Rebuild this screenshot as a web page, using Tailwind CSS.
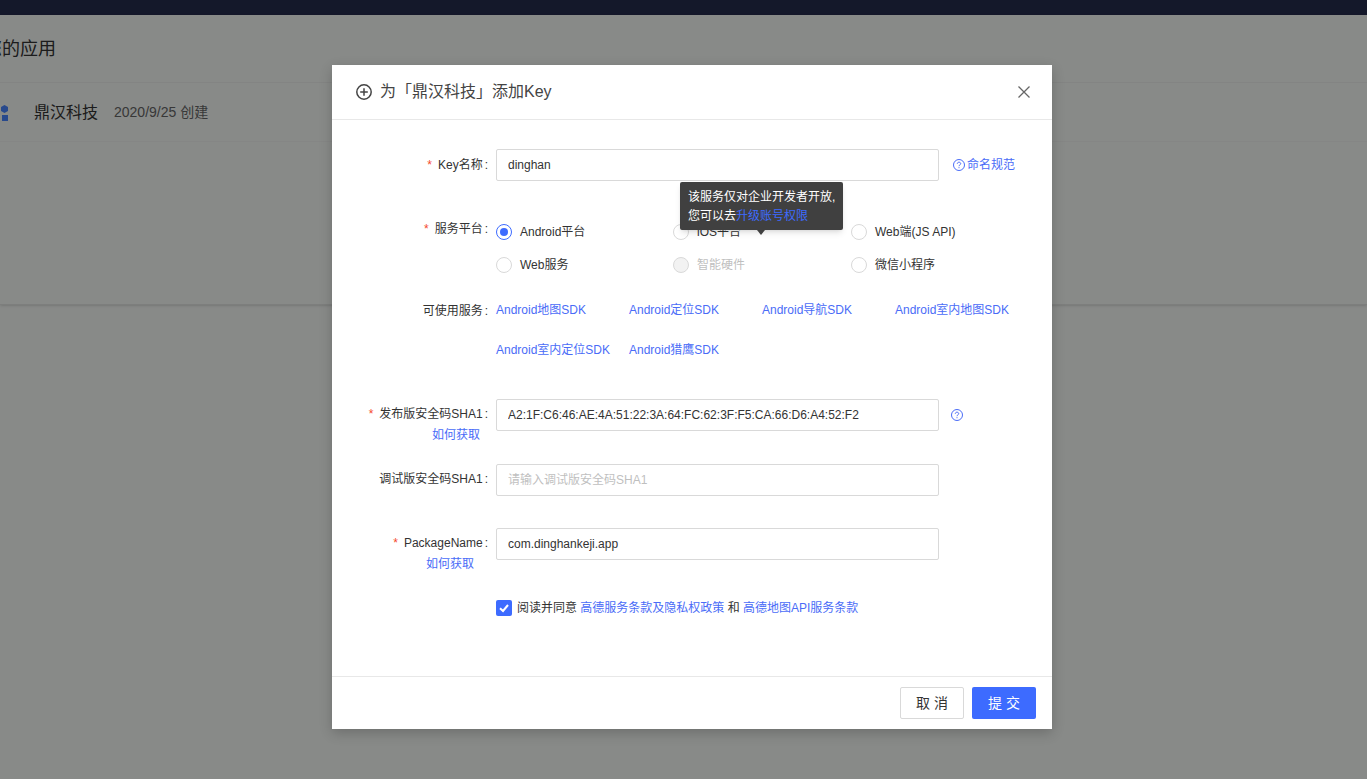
<!DOCTYPE html>
<html lang="zh-CN">
<head>
    <meta charset="UTF-8">
    <meta name="viewport" content="width=device-width, initial-scale=1.0">
    <title>添加Key</title>
    <script src="https://cdn.jsdelivr.net/npm/@tailwindcss/browser@4"></script>
</head>
<body class="relative h-screen overflow-hidden bg-[#f8fbf8] text-[#333] text-xs font-['Liberation_Sans','Noto_Sans_CJK_SC',sans-serif]">
    <!-- page behind the dialog -->
    <div class="h-[15px] bg-[#262c4e]"></div>
    <div class="h-[290px] border-b border-[#e4e6e4] shadow-sm">
        <div class="h-[68px] border-b border-[#eef0ee] -ml-4 flex items-center text-[18px]">您的应用</div>
        <div class="h-[59px] pt-px flex items-center border-b border-[#f3f5f3]">
            <svg class="w-2 h-4 mr-[26px]" viewBox="0 0 8 16"><path d="M4.500 0 8 2v4L4.500 8 1 6V2Z" fill="#4a86ff"/><rect x="2" y="10" width="6" height="6" fill="#4a86ff"/></svg>
            <span class="text-base">鼎汉科技</span>
            <span class="ml-4 mb-0.5 text-sm text-[#666]">2020/9/25 创建</span>
        </div>
    </div>

    <!-- overlay + dialog -->
    <div class="absolute inset-0 bg-black/45">
        <div class="relative ml-[332px] mt-[65px] w-[720px] h-[664px] bg-white flex flex-col shadow-[0_4px_12px_rgba(0,0,0,0.2)]">
            <div class="h-[55px] shrink-0 border-b border-[#e8e8e8] pl-6 pr-[22px] flex items-center">
                <svg class="w-4 h-4 mr-2" viewBox="0 0 16 16" fill="none" stroke="#444" stroke-width="1.500"><circle cx="8" cy="8" r="7.200"/><path d="M8 4.200v7.600M4.200 8h7.600"/></svg>
                <span class="text-base text-[#444]">为「鼎汉科技」添加Key</span>
                <svg class="w-3 h-3 ml-auto" viewBox="0 0 12 12" fill="none" stroke="#666" stroke-width="1.300"><path d="M.5.5l11 11M11.500.5l-11 11"/></svg>
            </div>

            <div class="flex-1 pt-[29px]">
                <!-- Key name -->
                <div class="flex items-center h-8">
                    <div class="w-[156px] text-right mr-2 whitespace-nowrap"><span class="text-[#f5492d] mr-[6px]">*</span>Key名称<span class="ml-[2px]">:</span></div>
                    <input value="dinghan" class="w-[443px] h-8 px-[11px] border border-[#d9d9d9] rounded-[2px] text-[#333] outline-none">
                    <a class="ml-3.5 flex items-center text-[#4a6cf7]">
                        <svg class="w-3 h-3 mr-0.5" viewBox="0 0 12 12" fill="none" stroke="#4a6cf7"><circle cx="6" cy="6" r="5.500"/><path d="M4.300 4.800C4.300 3.800 5 3.200 6 3.200s1.700.6 1.700 1.500C7.700 5.900 6 5.800 6 7.200"/><path d="M6 8.200v1"/></svg>
                        命名规范
                    </a>
                </div>

                <!-- Platform -->
                <div class="flex mt-[34px]">
                    <div class="w-[156px] text-right mr-2 whitespace-nowrap pt-[6px]"><span class="text-[#f5492d] mr-[6px]">*</span>服务平台<span class="ml-[2px]">:</span></div>
                    <div class="grid grid-cols-[177px_178px_auto] auto-rows-[33px] items-center">
                        <label class="flex items-center"><span class="w-4 h-4 rounded-full border border-[#3d6bff] flex items-center justify-center mr-2"><span class="w-2 h-2 rounded-full bg-[#3d6bff]"></span></span>Android平台</label>
                        <label class="flex items-center"><span class="w-4 h-4 rounded-full border border-[#d9d9d9] mr-2"></span>iOS平台</label>
                        <label class="flex items-center"><span class="w-4 h-4 rounded-full border border-[#d9d9d9] mr-2"></span>Web端(JS API)</label>
                        <label class="flex items-center"><span class="w-4 h-4 rounded-full border border-[#d9d9d9] mr-2"></span>Web服务</label>
                        <label class="flex items-center text-[#bfbfbf]"><span class="w-4 h-4 rounded-full border border-[#d9d9d9] bg-[#f2f2f2] mr-2"></span>智能硬件</label>
                        <label class="flex items-center"><span class="w-4 h-4 rounded-full border border-[#d9d9d9] mr-2"></span>微信小程序</label>
                    </div>
                </div>

                <!-- Services -->
                <div class="flex mt-[9px]">
                    <div class="w-[156px] text-right mr-2 whitespace-nowrap pt-[13px]">可使用服务<span class="ml-[2px]">:</span></div>
                    <div class="grid grid-cols-[133px_133px_133px_auto] auto-rows-[40px] items-center text-[#4a6cf7]">
                        <a>Android地图SDK</a>
                        <a>Android定位SDK</a>
                        <a>Android导航SDK</a>
                        <a>Android室内地图SDK</a>
                        <a>Android室内定位SDK</a>
                        <a>Android猎鹰SDK</a>
                    </div>
                </div>

                <!-- Release SHA1 -->
                <div class="flex mt-[29px] h-[65px]">
                    <div class="w-[156px] text-right mr-2 whitespace-nowrap">
                        <div class="h-[30px] flex items-center justify-end"><span class="text-[#f5492d] mr-[6px]">*</span>发布版安全码SHA1<span class="ml-[2px]">:</span></div>
                        <a class="block pr-2 -mt-[2px] leading-[16px] text-[#4a6cf7]">如何获取</a>
                    </div>
                    <input value="A2:1F:C6:46:AE:4A:51:22:3A:64:FC:62:3F:F5:CA:66:D6:A4:52:F2" class="w-[443px] h-8 px-[11px] border border-[#d9d9d9] rounded-[2px] text-[#333] outline-none">
                    <svg class="w-3 h-3 ml-3 mt-[10px]" viewBox="0 0 12 12" fill="none" stroke="#4a6cf7"><circle cx="6" cy="6" r="5.500"/><path d="M4.300 4.800C4.300 3.800 5 3.200 6 3.200s1.700.6 1.700 1.500C7.700 5.900 6 5.800 6 7.200"/><path d="M6 8.200v1"/></svg>
                </div>

                <!-- Debug SHA1 -->
                <div class="flex items-center h-8">
                    <div class="w-[156px] text-right mr-2 whitespace-nowrap -translate-y-px">调试版安全码SHA1<span class="ml-[2px]">:</span></div>
                    <input placeholder="请输入调试版安全码SHA1" class="w-[443px] h-8 px-[11px] border border-[#d9d9d9] rounded-[2px] outline-none placeholder:text-[#bfbfbf]">
                </div>

                <!-- Package name -->
                <div class="flex mt-8 h-[72px]">
                    <div class="w-[156px] text-right mr-2 whitespace-nowrap">
                        <div class="h-[30px] flex items-center justify-end"><span class="text-[#f5492d] mr-[6px]">*</span>PackageName<span class="ml-[2px]">:</span></div>
                        <a class="block pr-3.5 -mt-[2px] leading-[16px] text-[#4a6cf7]">如何获取</a>
                    </div>
                    <input value="com.dinghankeji.app" class="w-[443px] h-8 px-[11px] border border-[#d9d9d9] rounded-[2px] text-[#333] outline-none">
                </div>

                <!-- Agreement -->
                <div class="flex items-center ml-[164px] h-4">
                    <span class="w-4 h-4 rounded-[2px] bg-[#3d6bff] flex items-center justify-center mr-[5px]">
                        <svg class="w-3 h-3" viewBox="0 0 12 12" fill="none" stroke="#fff" stroke-width="2"><path d="M2 6.300 5 9l5-6"/></svg>
                    </span>
                    阅读并同意&nbsp;<a class="text-[#4a6cf7]">高德服务条款及隐私权政策</a>&nbsp;和&nbsp;<a class="text-[#4a6cf7]">高德地图API服务条款</a>
                </div>
            </div>

            <div class="h-[53px] shrink-0 border-t border-[#e8e8e8] px-4 flex justify-end items-start pt-2.5 gap-2">
                <button class="w-16 h-8 border border-[#d9d9d9] rounded-[2px] bg-white text-[#333] text-sm">取 消</button>
                <button class="w-16 h-8 rounded-[2px] bg-[#3d6bff] text-white text-sm">提 交</button>
            </div>

            <!-- tooltip over the iOS option -->
            <div class="absolute left-[348px] top-[117px] w-[163px] h-12 bg-[#404040] rounded-[2px] px-2 py-1.5 text-white leading-[19px] shadow-md">
                <div class="whitespace-nowrap">该服务仅对企业开发者开放,</div>
                <div>您可以去<a class="text-[#3d6bff]">升级账号权限</a></div>
                <span class="absolute left-[77px] -bottom-[5px] border-x-[4px] border-t-[5px] border-x-transparent border-t-[#404040]"></span>
            </div>
        </div>
    </div>
</body>
</html>
